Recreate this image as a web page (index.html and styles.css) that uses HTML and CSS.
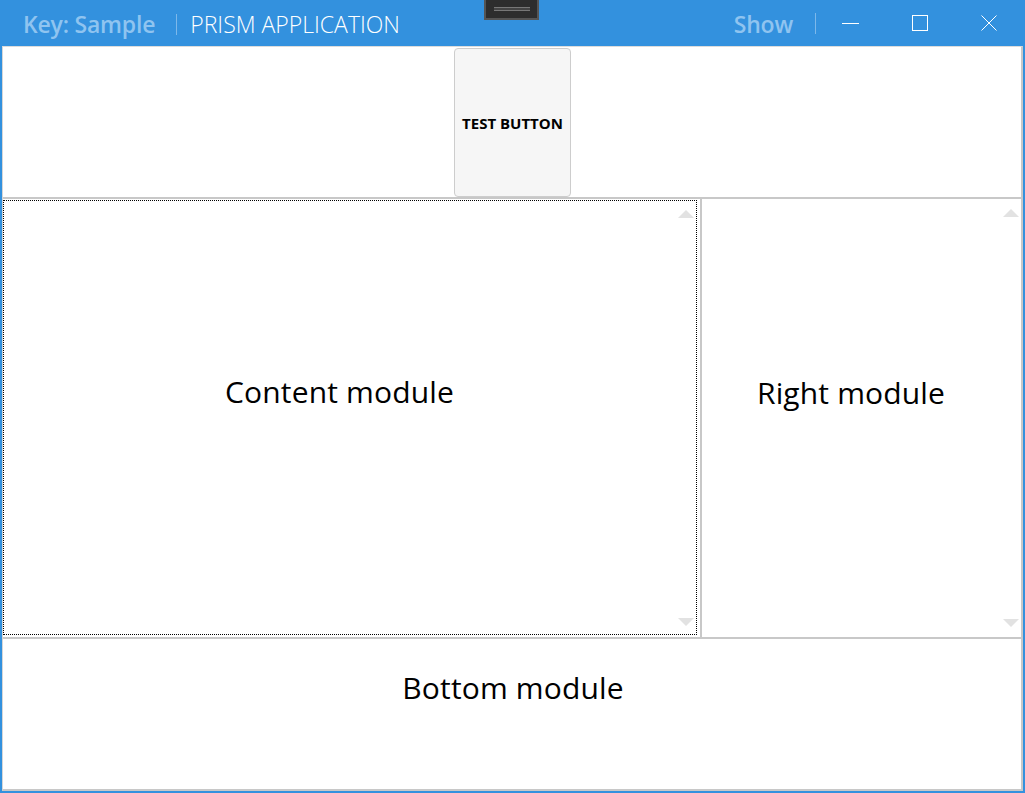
FILE: index.html
```html
<!DOCTYPE html>
<html>
<head>
<meta charset="utf-8">
<link rel="stylesheet" href="styles.css">
</head>
<body>
<div class="window">
  <div class="titlebar">
    <div class="title-left">
      <span class="key">Key: Sample</span>
      <span class="sep"></span>
      <span class="app">PRISM APPLICATION</span>
    </div>
    <div class="title-right">
      <span class="show">Show</span>
      <span class="sep sep-r"></span>
      <span class="ctl ctl-min"><svg width="17" height="15" viewBox="0 0 17 15"><line x1="0" y1="7.5" x2="17" y2="7.5" stroke="#fff" stroke-width="1"/></svg></span>
      <span class="ctl ctl-max"><svg width="16" height="16" viewBox="0 0 16 16"><rect x="0.5" y="0.5" width="15" height="15" fill="none" stroke="#fff" stroke-width="1"/></svg></span>
      <span class="ctl ctl-close"><svg width="16" height="16" viewBox="0 0 16 16"><path d="M0.5 0.5 L15.5 15.5 M15.5 0.5 L0.5 15.5" stroke="#fff" stroke-width="1"/></svg></span>
    </div>
    <div class="handle"><div class="handle-line"></div></div>
  </div>
  <div class="frame">
    <div class="top-row">
      <button class="test-btn">TEST BUTTON</button>
    </div>
    <div class="hsep"></div>
    <div class="mid-row">
      <div class="cell cell-content">
        <div class="focus">
          <div class="module-text">Content module</div>
          <div class="scrollcol">
            <span class="arrow arrow-up"></span>
            <span class="arrow arrow-down"></span>
          </div>
        </div>
      </div>
      <div class="vsep"></div>
      <div class="cell cell-right">
        <div class="module-text">Right module</div>
        <div class="scrollcol">
          <span class="arrow arrow-up"></span>
          <span class="arrow arrow-down"></span>
        </div>
      </div>
    </div>
    <div class="hsep"></div>
    <div class="bottom-row">
      <div class="module-text">Bottom module</div>
    </div>
  </div>
</div>
</body>
</html>
```

FILE: styles.css
```css
* { box-sizing: border-box; }
html, body { margin: 0; padding: 0; background: #fff; }
body { font-family: "Open Sans", "Noto Sans", sans-serif; }

.window {
  width: 1025px;
  height: 793px;
  border: 2px solid #3391de;
  border-top: none;
  display: flex;
  flex-direction: column;
  background: #fff;
}

.titlebar {
  position: relative;
  height: 46px;
  background: #3391de;
  display: flex;
  align-items: center;
  justify-content: space-between;
  flex: none;
}
.title-left { display: flex; align-items: center; padding-left: 21px; padding-top: 2px; }
.key {
  font-weight: 600;
  font-size: 23px;
  color: #8fc4f0;
  letter-spacing: -0.2px;
}
.sep {
  display: inline-block;
  width: 1px;
  height: 21px;
  background: #7db8ea;
  margin: 0 13px 0 21px;
}
.app {
  font-weight: 300;
  font-size: 23px;
  color: #fff;
}
.title-right { display: flex; align-items: center; height: 100%; }
.show {
  font-weight: 600;
  font-size: 23px;
  color: #8fc4f0;
  letter-spacing: -0.2px;
  padding-top: 2px;
}
.sep-r { margin: 0 26px 0 22px; height: 21px; }
.ctl { display: flex; align-items: center; justify-content: center; }
.ctl svg { display: block; }
.ctl-min { width: 17px; margin-right: 53px; }
.ctl-max { width: 16px; margin-right: 53px; }
.ctl-close { width: 16px; margin-right: 26px; }

.handle {
  position: absolute;
  left: 482px;
  top: 0;
  width: 55px;
  height: 20px;
  background: #2d2d2d;
  border: 2px solid #555;
  border-top: none;
  display: flex;
  align-items: center;
  justify-content: center;
}
.handle-line {
  width: 36px;
  height: 4px;
  border-top: 1px solid #777;
  border-bottom: 1px solid #777;
  background: #444;
  margin-top: -1px;
}

.frame {
  flex: 1;
  display: flex;
  flex-direction: column;
  border-top: 1px solid #dcdcdc;
  border-left: 1px solid #d6d6d6;
  border-right: 2px solid #c8c8c8;
  border-bottom: 2px solid #c8c8c8;
}

.top-row {
  height: 150px;
  display: flex;
  justify-content: center;
  padding-top: 1px;
  flex: none;
}
.test-btn {
  width: 117px;
  height: 149px;
  margin-left: 1px;
  background: #f6f6f6;
  border: 1px solid #cdcdcd;
  border-radius: 4px;
  font-family: "Open Sans", "Noto Sans", sans-serif;
  font-weight: 700;
  font-size: 15px;
  color: #000;
  padding: 0;
}

.hsep { height: 2px; background: #c8c8c8; flex: none; }

.mid-row {
  height: 438px;
  display: flex;
  flex: none;
}
.vsep { width: 2px; background: #c8c8c8; flex: none; }

.cell { display: flex; position: relative; }
.cell-content { width: 697px; padding: 1px 3px 2px 0; }
.cell-right { flex: 1; }

.focus {
  flex: 1;
  display: flex;
  border: 1px dotted #000;
}

.module-text {
  flex: 1;
  display: flex;
  align-items: center;
  justify-content: center;
  font-family: "Open Sans", "Noto Sans", sans-serif;
  font-size: 30px;
  letter-spacing: 0.15px;
  color: #000;
  padding-bottom: 52px;
}

.scrollcol {
  width: 21px;
  display: flex;
  flex-direction: column;
  justify-content: space-between;
  align-items: center;
  padding: 9px 0 8px;
  flex: none;
}
.cell-right .scrollcol { padding: 10px 0 10px; }

.arrow {
  width: 0;
  height: 0;
  border-left: 8px solid transparent;
  border-right: 8px solid transparent;
}
.arrow-up { border-bottom: 8px solid #e2e2e2; }
.arrow-down { border-top: 8px solid #e2e2e2; }

.bottom-row {
  flex: 1;
  display: flex;
}
.bottom-row .module-text { padding-bottom: 54px; padding-left: 2px; }
```
